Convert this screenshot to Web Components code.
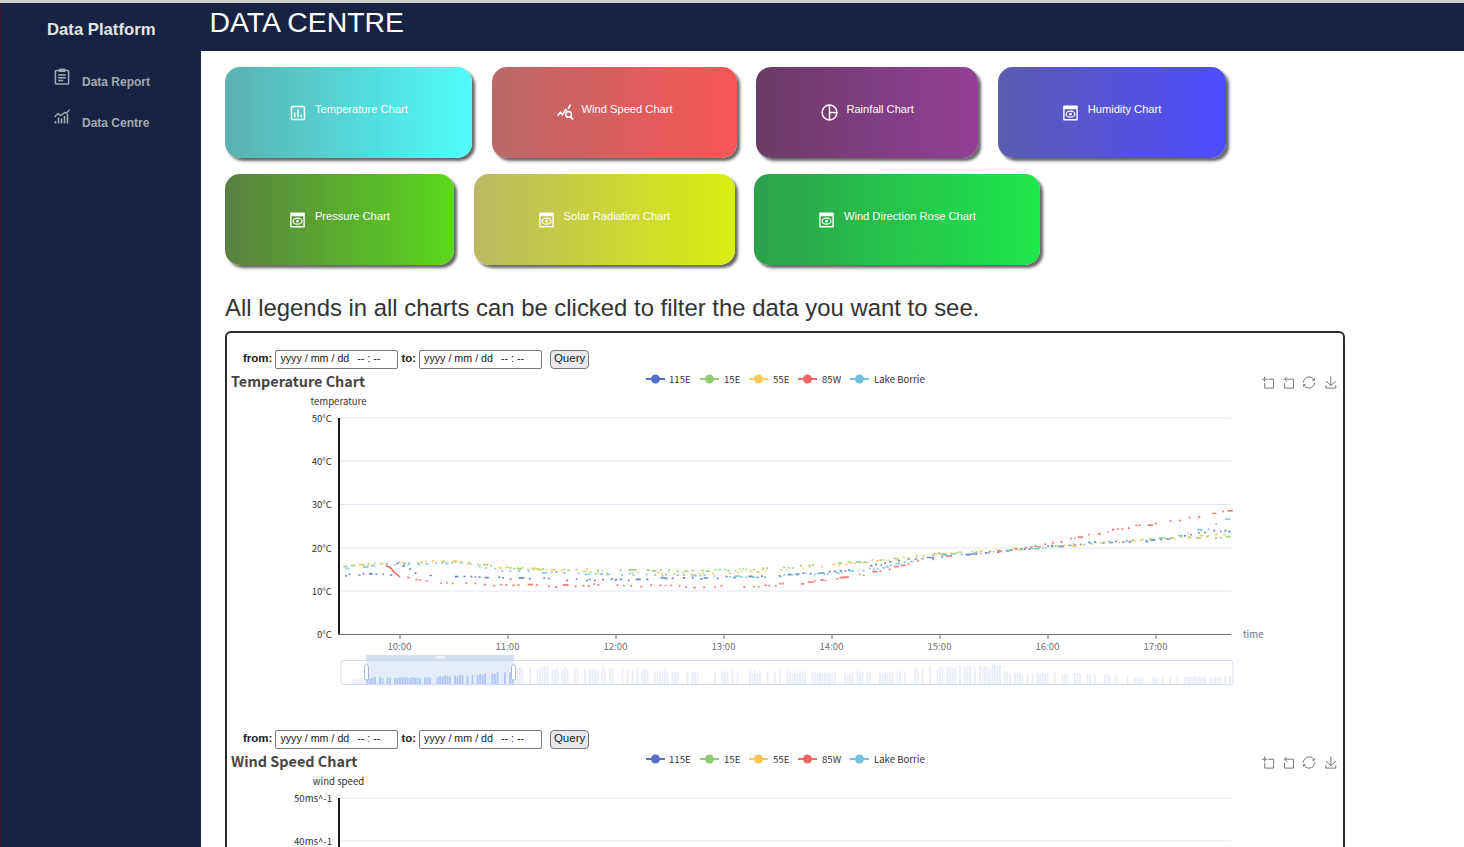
<!DOCTYPE html>
<html lang="en">
<head>
<meta charset="utf-8">
<title>Data Centre</title>
<style>
    html, body { margin: 0; height: 100%; overflow: hidden; background: #fff; }
    body { font-family: "Liberation Sans", Arial, sans-serif; }
</style>
</head>
<body>
<data-app>
    <data-sidebar slot="side" heading="Data Platform">
        <nav-item icon="report">Data Report</nav-item>
        <nav-item icon="centre">Data Centre</nav-item>
    </data-sidebar>
    <page-header slot="top">DATA CENTRE</page-header>
    <button-grid>
        <chart-button icon="bars" from="#5cb0b0" to="#4ffcfc">Temperature Chart</chart-button>
        <chart-button icon="search" from="#ba6868" to="#f85555">Wind Speed Chart</chart-button>
        <chart-button icon="pie" from="#693c66" to="#943f97">Rainfall Chart</chart-button>
        <chart-button icon="eye" from="#5c5cb0" to="#4d4dff">Humidity Chart</chart-button>
        <chart-button icon="eye" from="#5a8040" to="#5ad81e">Pressure Chart</chart-button>
        <chart-button icon="eye" from="#bab962" to="#d8f010">Solar Radiation Chart</chart-button>
        <chart-button icon="eye" from="#2ea04c" to="#1ee84a">Wind Direction Rose Chart</chart-button>
    </button-grid>
    <hint-line>All legends in all charts can be clicked to filter the data you want to see.</hint-line>
    <chart-panel>
        <chart-block heading="Temperature Chart" axis="temperature" unit="°C" data="temperature"></chart-block>
        <chart-block heading="Wind Speed Chart" axis="wind speed" unit="ms^-1"></chart-block>
    </chart-panel>
</data-app>

<script>
const ICONS = {
    report: '<svg width="16" height="17" viewBox="0 0 16 17" fill="none" stroke="currentColor" stroke-width="1.5"><path d="M5 2.500H2.200a.8.8 0 0 0-.8.8v11.900a.8.8 0 0 0 .8.8h11.600a.8.8 0 0 0 .8-.8V3.300a.8.8 0 0 0-.8-.8H11"/><rect x="4.800" y=".6" width="6.400" height="3.400" fill="currentColor" stroke="none"/><path d="M4.200 7h7.600M4.200 9.800h7.600M4.200 12.600h5"/></svg>',
    centre: '<svg width="16" height="15" viewBox="0 0 16 15" fill="none" stroke="currentColor"><path stroke-width="1.400" d="M.6 8 4 4.400l2.600 2.200L11 3.400l1.600 1L15.400 .6"/><path stroke-width="1.600" d="M1.500 14.500v-2.600M4.500 14.500V8.600M7.500 14.500V9.600M10.500 14.500V7M13.500 14.500V5"/></svg>',
    bars: '<svg width="16" height="16" viewBox="0 0 16 16" fill="none" stroke="#fff"><rect x="1.500" y="1.500" width="13" height="13" rx="1" stroke-width="1.500"/><path stroke-width="1.400" d="M4.800 12.200V7.600M8 12.200V4.400M11.200 12.200V9.400"/></svg>',
    search: '<svg width="18" height="17" viewBox="0 0 18 17" fill="none" stroke="#fff"><path stroke-width="1.600" d="M.6 11.800 3.400 8.200 5.400 10.800 8.600 5.600 9.800 7M11 5 13.500 .6"/><circle cx="11.600" cy="10.400" r="2.800" stroke-width="1.600"/><path stroke-width="1.800" d="m13.600 12.600 2.400 3"/></svg>',
    pie: '<svg width="17" height="17" viewBox="0 0 17 17" fill="none" stroke="#fff" stroke-width="1.500"><circle cx="8.500" cy="8.500" r="7.400"/><path d="M8.500 1v15M8.500 8.500h7.400"/></svg>',
    eye: '<svg width="15" height="16" viewBox="0 0 15 16"><path fill="#fff" fill-rule="evenodd" d="M1 .5h13a.8.8 0 0 1 .8.8v13.400a.8.8 0 0 1-.8.8H1a.8.8 0 0 1-.8-.8V1.300A.8.8 0 0 1 1 .5ZM1.600 4.200v9.900h11.800V4.200Z"/><ellipse cx="7.500" cy="9.200" rx="4.400" ry="3" fill="none" stroke="#fff" stroke-width="1.200"/><circle cx="7.500" cy="9.200" r="1.400" fill="#fff"/></svg>'
};

class DataApp extends HTMLElement {
    connectedCallback() {
        this.attachShadow({ mode: 'open' });
        this.shadowRoot.innerHTML = `
            <style>
                :host { display: block; height: 100vh; overflow: hidden; box-sizing: border-box; padding: 3px 0 0 1px; background: linear-gradient(#cfcfd2 0 3px, #3b1c26 3px); }
                .shell { display: grid; grid-template-columns: 200px 1fr; grid-template-rows: 48px 1fr; height: 100%; background: #fff; }
                .side { grid-row: 1 / 3; display: grid; }
                .body { padding: 16px 24px; min-width: 0; overflow: hidden; }
            </style>
            <div class="shell">
                <div class="side"><slot name="side"></slot></div>
                <slot name="top"></slot>
                <div class="body"><slot></slot></div>
            </div>
        `;
    }
}

class DataSidebar extends HTMLElement {
    connectedCallback() {
        this.attachShadow({ mode: 'open' });
        this.shadowRoot.innerHTML = `
            <style>
                :host { display: block; background: #182343; color: #e6e6e6; }
                h2 { margin: 0; padding: 17px 0 0 46px; font: bold 16.7px/20px "Liberation Sans", sans-serif; color: #e4e4e4; }
                .list { padding-top: 28px; display: flex; flex-direction: column; gap: 17px; }
            </style>
            <h2>${this.getAttribute('heading')}</h2>
            <div class="list"><slot></slot></div>
        `;
    }
}

class NavItem extends HTMLElement {
    connectedCallback() {
        this.attachShadow({ mode: 'open' });
        this.shadowRoot.innerHTML = `
            <style>
                :host { display: flex; align-items: flex-start; gap: 12px; padding-left: 53px; height: 24px; color: #a4a8b2; font: bold 12px/16px "Liberation Sans", sans-serif; }
                svg { display: block; }
                .label { padding-top: 6px; }
            </style>
            ${ICONS[this.getAttribute('icon')]}
            <span class="label"><slot></slot></span>
        `;
    }
}

class PageHeader extends HTMLElement {
    connectedCallback() {
        this.attachShadow({ mode: 'open' });
        this.shadowRoot.innerHTML = `
            <style>
                :host { display: block; background: #182343; color: #fff; padding: 1px 0 0 8.500px; font: 28.4px/36px "Liberation Sans", sans-serif; }
            </style>
            <slot></slot>
        `;
    }
}

class ButtonGrid extends HTMLElement {
    connectedCallback() {
        this.attachShadow({ mode: 'open' });
        this.shadowRoot.innerHTML = `
            <style>
                :host { display: flex; flex-wrap: wrap; gap: 16px 19.300px; width: 1120px; }
            </style>
            <slot></slot>
        `;
    }
}

class ChartButton extends HTMLElement {
    connectedCallback() {
        const from = this.getAttribute('from'), to = this.getAttribute('to');
        this.attachShadow({ mode: 'open' });
        this.shadowRoot.innerHTML = `
            <style>
                :host { display: flex; align-items: center; box-sizing: border-box; height: 91px; padding: 0 64.600px 0 64.900px; border-radius: 15px; color: #fff; background: linear-gradient(90deg, ${from}, ${to}); box-shadow: 3px 3px 3px #666; cursor: pointer; font: 11.150px/16px "Liberation Sans", sans-serif; }
                .icon { width: 25px; flex: none; }
                svg { display: block; }
                .label { margin-bottom: 8px; white-space: nowrap; }
            </style>
            <span class="icon">${ICONS[this.getAttribute('icon')]}</span>
            <span class="label"><slot></slot></span>
        `;
    }
}

class HintLine extends HTMLElement {
    connectedCallback() {
        this.attachShadow({ mode: 'open' });
        this.shadowRoot.innerHTML = `
            <style>
                :host { display: block; margin-top: 26px; color: #333; font: 23.9px/34px "Liberation Sans", sans-serif; white-space: nowrap; }
            </style>
            <slot></slot>
        `;
    }
}

class ChartPanel extends HTMLElement {
    connectedCallback() {
        this.attachShadow({ mode: 'open' });
        this.shadowRoot.innerHTML = `
            <style>
                :host { display: block; box-sizing: border-box; width: 1120px; margin-top: 6px; border: 2px solid #2b2b2b; border-radius: 6px; }
            </style>
            <slot></slot>
        `;
    }
}

class DateField extends HTMLElement {
    connectedCallback() {
        this.attachShadow({ mode: 'open' });
        this.shadowRoot.innerHTML = `
            <style>
                :host { display: flex; align-items: center; gap: 8px; box-sizing: border-box; width: 123px; height: 19px; padding: 0 4px 3px; background: #fff; border: 1px solid #767676; border-radius: 2px; color: #222; font-size: 10.700px; white-space: pre; }
            </style>
            <span>yyyy / mm / dd</span><span>-- : --</span>
        `;
    }
}

class QueryForm extends HTMLElement {
    connectedCallback() {
        this.attachShadow({ mode: 'open' });
        this.shadowRoot.innerHTML = `
            <style>
                :host { display: flex; align-items: center; height: 19px; padding-left: 16px; color: #222; font: 11.5px/14px "Liberation Sans", sans-serif; }
                b { margin: 0 3px 3px 0; }
                date-field + b { margin-left: 3px; }
                button { margin-left: 8px; width: 39px; height: 19px; padding: 0 0 3px; background: #e9e9ed; border: 1px solid #767676; border-radius: 4px; color: #222; font: inherit; }
            </style>
            <b>from:</b><date-field></date-field>
            <b>to:</b><date-field></date-field>
            <button type="button">Query</button>
        `;
    }
}

const SERIES = [
    { name: '115E', color: '#5470c6', lx: 646, tx: 669, curve: [[340,575],[394,574],[396,563],[402,566],[420,575],[500,578],[600,580],[700,578],[780,576],[830,572],[870,566],[900,560],[950,556],[1000,551],[1100,542],[1150,541],[1200,532],[1231,531]] },
    { name: '15E', color: '#91cc75', lx: 700, tx: 724, curve: [[340,567],[400,563],[450,561],[480,565],[520,569],[600,570],[700,571],[780,568],[840,563],[880,560],[920,555],[1000,551],[1100,542],[1180,538],[1231,537]] },
    { name: '55E', color: '#fac858', lx: 749, tx: 773, curve: [[340,565],[400,563],[450,561],[500,567],[600,572],[700,574],[780,570],[840,564],[880,561],[920,556],[1000,550],[1050,547],[1100,543],[1180,538],[1231,534]] },
    { name: '85W', color: '#ee6666', lx: 798, tx: 822, curve: [[400,577],[410,578],[440,583],[500,585],[550,586],[600,585],[650,586],[700,587],[750,587],[800,583],[850,577],[880,571],[910,563],[950,556],[1000,551],[1040,546],[1080,537],[1130,527],[1180,520],[1231,510]] },
    { name: 'Lake Borrie', color: '#73c0de', lx: 850, tx: 874, curve: [[340,568],[400,564],[460,563],[500,570],[560,573],[650,575],[750,577],[820,574],[880,568],[930,556],[1000,551],[1100,543],[1170,538],[1185,534],[1194,528],[1204,532],[1212,526],[1231,516]] }
];
const TICKS = ['10:00', '11:00', '12:00', '13:00', '14:00', '15:00', '16:00', '17:00'];
const GRID_Y = [418, 461, 504.5, 548, 591];

// small seeded generator so the dots come out the same on every load
function seeded(seed) {
    return () => (seed = (seed * 16807) % 2147483647) / 2147483647;
}

function along(curve, x) {
    for (let i = 1; i < curve.length; i++) {
        if (x <= curve[i][0]) {
            const [x0, y0] = curve[i - 1], [x1, y1] = curve[i];
            return y0 + (y1 - y0) * (x - x0) / (x1 - x0);
        }
    }
    return curve[curve.length - 1][1];
}

function seriesDots(s, index) {
    const rand = seeded(1234 + index * 97);
    let d = '';
    for (let x = s.curve[0][0]; x < 1229; x += 3 + rand() * 7) {
        if (rand() < 0.2) continue;
        const y = along(s.curve, x) + (rand() - 0.5) * 2;
        const len = rand() < 0.2 ? 3 + rand() * 3 : 1.500 + rand();
        d += `M${x.toFixed(1)} ${y.toFixed(1)}h${len.toFixed(1)}`;
    }
    return `<path d="${d}" fill="none" stroke="${s.color}" stroke-width="1.700" opacity=".85"/>`;
}

function overviewBars() {
    const rand = seeded(4242);
    const heights = [[350,5],[366,7],[430,7],[450,9],[510,13],[516,18],[640,17],[660,14],[900,13],[925,18],[1000,20],[1010,12],[1100,11],[1130,8],[1231,8]];
    let out = '', inside = '';
    for (let x = 350; x < 1231; x += 2.5) {
        if (rand() < (x < 515 ? 0.3 : 0.38)) continue;
        const h = along(heights, x) * (0.8 + rand() * 0.2);
        const bar = `M${x.toFixed(1)} 684v-${h.toFixed(1)}`;
        if (x > 366 && x < 514) inside += bar; else out += bar;
    }
    return `<path d="${out}" stroke="#eaedf7" stroke-width="1.800" fill="none"/>
        <path d="${inside}" stroke="#b9ccf6" stroke-width="1.800" fill="none"/>`;
}

class ChartBlock extends HTMLElement {
    connectedCallback() {
        const unit = this.getAttribute('unit');
        const hasData = this.getAttribute('data') === 'temperature';
        const legend = SERIES.map(s => `
            <path d="M${s.lx} 379h19" stroke="${s.color}" stroke-width="2"/>
            <circle cx="${s.lx + 9.500}" cy="379" r="4.500" fill="${s.color}"/>
            <text x="${s.tx}" y="378.500" class="legend">${s.name}</text>`).join('');
        const grid = GRID_Y.map(y => `<path d="M340 ${y}H1231" stroke="#e0e6f1"/>`).join('');
        const yLabels = [50, 40, 30, 20, 10, 0].map((v, i) =>
            `<text x="332" y="${418 + i * 43.2}" class="tick" text-anchor="end">${v}${unit}</text>`).join('');
        const xLabels = TICKS.map((t, i) => `
            <path d="M${400 + i * 108} 634v5" stroke="#6e7079"/>
            <text x="${399.500 + i * 108}" y="646" class="axis" text-anchor="middle">${t}</text>`).join('');
        const tools = [
            [1262, 'M0,13.5h26.9 M13.5,26.9V0 M32.1,13.500H58V58H13.500 V32.100'],
            [1282.500, 'M22,1.400L9.900,13.500l12.300,12.300 M10.300,13.500H54.900v44.600 H10.300v-26'],
            [1303, 'M47,18.900h9.800V8.700 M56.300,20.100 C52.100,9,40.500,.6,26.800,2.100C12.600,3.700,1.600,16.200,2.100,30.600 M13,41.100H3.100v10.200 M3.700,39.900c4.200,11.100,15.800,19.500,29.500,18 c14.200-1.600,25.200-14.100,24.700-28.500'],
            [1325, 'M4.700,22.900L29.300,45.500L54.700,23.400M4.600,43.600L4.600,58L53.800,58L53.800,43.600M29.200,45.100L29.200,0']
        ].map(([x, d]) => `<path transform="translate(${x} 376.500) scale(.2)" d="${d}" fill="none" stroke="#777" vector-effect="non-scaling-stroke"/>`).join('');
        const data = hasData ? SERIES.map(seriesDots).join('') +
            '<path d="M386 566c4 0 6 3 8 6l6 5" fill="none" stroke="#ee6666" stroke-width="1.500"/>' : '';

        this.attachShadow({ mode: 'open' });
        this.shadowRoot.innerHTML = `
            <style>
                :host { display: block; padding-top: 17px; }
                svg { display: block; }
                text { font-family: "Noto Sans CJK SC", "Noto Sans", sans-serif; dominant-baseline: central; }
                .title { font-size: 14.4px; font-weight: 700; fill: #464646; }
                .legend, .name, .tick { font-size: 9.600px; fill: #333; }
                .axis { font-size: 9.600px; fill: #6e7079; }
            </style>
            <query-form></query-form>
            <svg width="1116" height="344" viewBox="227 369 1116 344">
                <text x="231" y="380" class="title">${this.getAttribute('heading')}</text>
                ${legend}
                ${tools}
                <text x="338.500" y="401" class="name" text-anchor="middle">${this.getAttribute('axis')}</text>
                ${grid}
                ${yLabels}
                ${data}
                <path d="M339 418V634" stroke="#1a1a1a" stroke-width="2"/>
                <path d="M338 634.500H1231" stroke="#6e7079"/>
                ${xLabels}
                <text x="1243" y="634" class="axis">time</text>
                ${overviewBars()}
                <rect x="341" y="660.500" width="892" height="24" rx="3" fill="none" stroke="#d2dbee"/>
                <rect x="366" y="660.500" width="148" height="24" fill="#87aff5" opacity=".22"/>
                <rect x="366" y="655" width="148" height="5.500" fill="#d6def1"/>
                <rect x="436" y="656" width="9" height="2.500" fill="#eef1f8"/>
                <rect x="364.500" y="665" width="4" height="15" rx="1.500" fill="#fff" stroke="#acb8d1"/>
                <rect x="511.500" y="665" width="4" height="15" rx="1.500" fill="#fff" stroke="#acb8d1"/>
            </svg>
        `;
    }
}

customElements.define('data-app', DataApp);
customElements.define('data-sidebar', DataSidebar);
customElements.define('nav-item', NavItem);
customElements.define('page-header', PageHeader);
customElements.define('button-grid', ButtonGrid);
customElements.define('chart-button', ChartButton);
customElements.define('hint-line', HintLine);
customElements.define('chart-panel', ChartPanel);
customElements.define('date-field', DateField);
customElements.define('query-form', QueryForm);
customElements.define('chart-block', ChartBlock);
</script>
</body>
</html>
